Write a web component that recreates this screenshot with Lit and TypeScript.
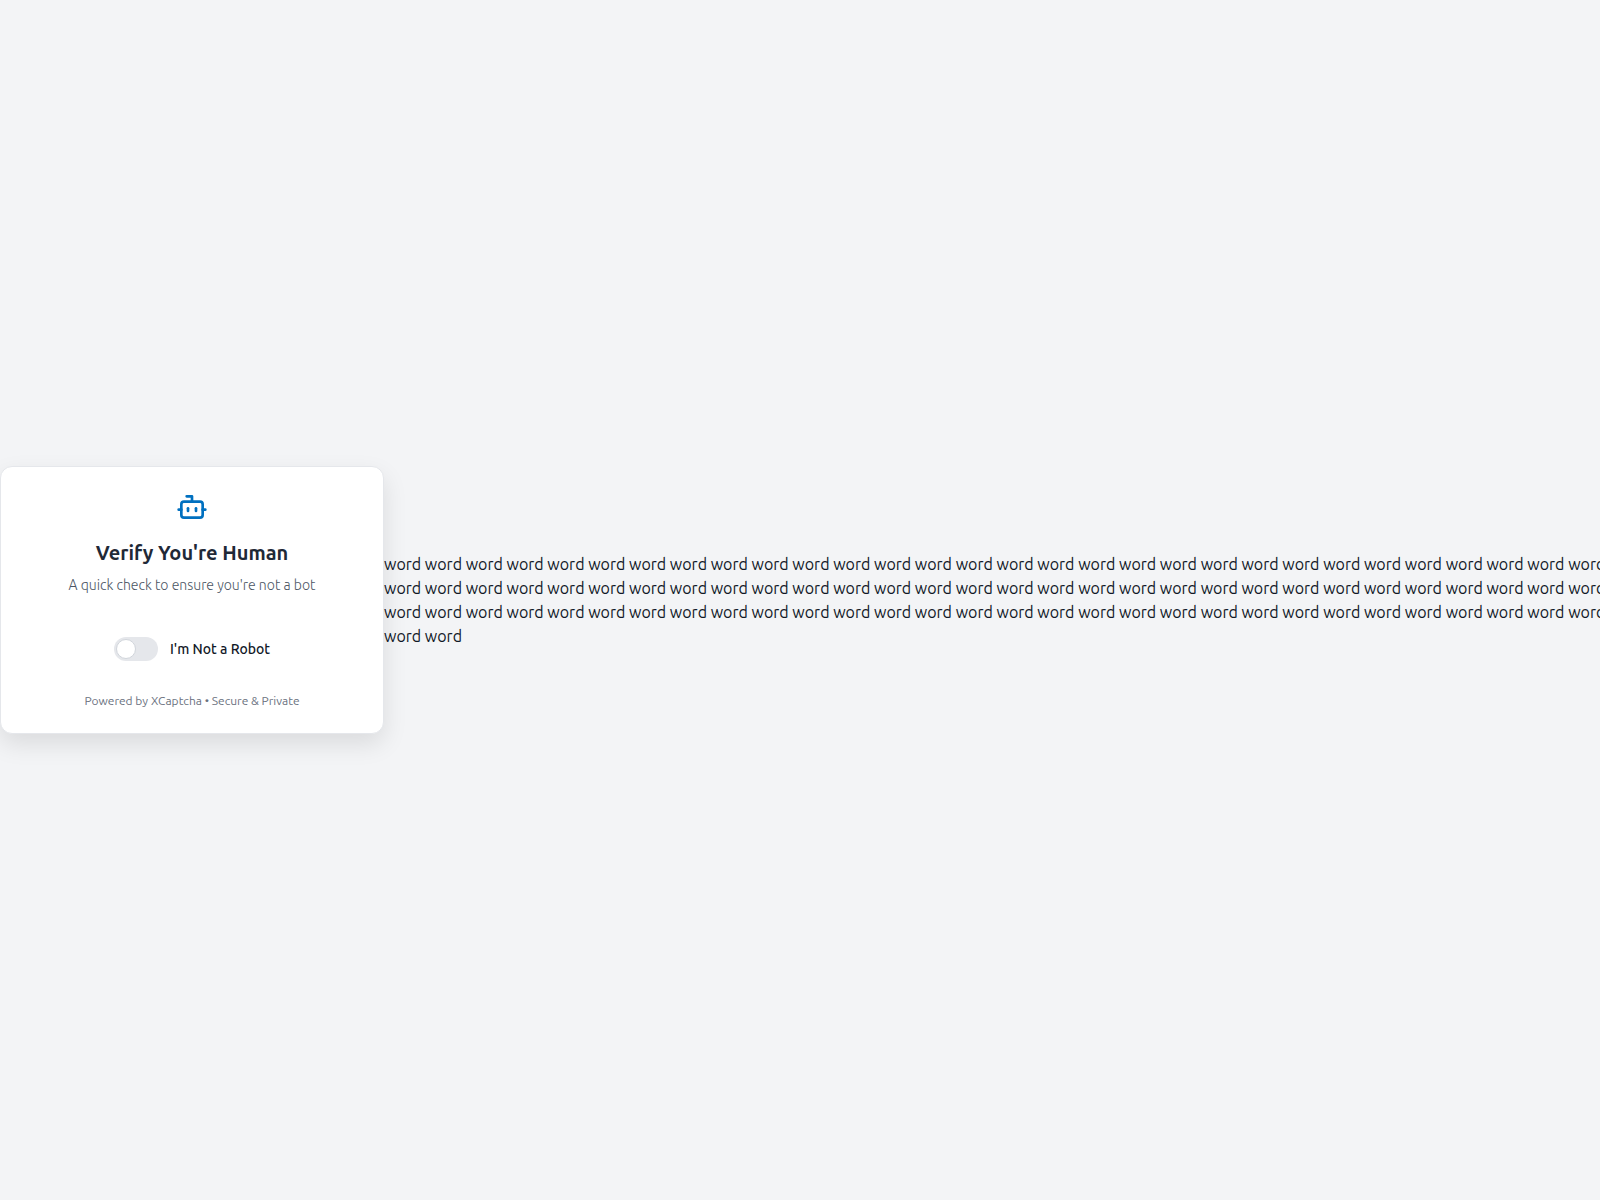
import { LitElement, html, css } from "lit";
import { customElement } from "lit/decorators.js";

const words = Array(92).fill("word").join(" ");

@customElement("app-root")
export class AppRoot extends LitElement {
  static styles = css`
    :host {
      display: flex;
      align-items: center;
      width: 1600px;
      height: 1200px;
      overflow: hidden;
      background: #f3f4f6;
      font-family: Ubuntu, "Noto Sans", sans-serif;
      font-size: 16px;
      line-height: 24px;
      color: #111827;
    }
    .card {
      flex: none;
      box-sizing: border-box;
      width: 384px;
      padding: 24px;
      background: #fff;
      border: 1px solid #e5e7eb;
      border-radius: 12px;
      box-shadow: 0 10px 25px rgba(0, 0, 0, 0.1);
      display: flex;
      flex-direction: column;
      align-items: center;
      text-align: center;
    }
    .icon { display: block; width: 32px; height: 32px; color: #0070c0; }
    h2 { margin: 16px 0 0; font-size: 20px; line-height: 28px; font-weight: 600; color: #1f2937; }
    .sub { margin: 8px 0 0; font-size: 14px; line-height: 20px; color: #4b5563; font-weight: 300; }
    .row { display: flex; align-items: center; gap: 12px; margin-top: 42px; }
    .track { position: relative; width: 44px; height: 24px; border-radius: 12px; background: #e5e7eb; }
    .knob {
      position: absolute; left: 2px; top: 2px; box-sizing: border-box;
      width: 20px; height: 20px; border-radius: 50%; background: #fff; border: 1px solid #d1d5db;
    }
    .label { font-size: 14px; line-height: 20px; font-weight: 500; color: #111827; }
    .foot { margin: 32px 0 0; font-size: 12px; line-height: 16px; color: #6b7280; }
    .text { flex: none; width: 1240px; }
  `;

  render() {
    return html`
      <div class="card">
        <svg class="icon" viewBox="0 0 24 24" fill="none" stroke="currentColor" stroke-width="2" stroke-linecap="round" stroke-linejoin="round">
          <path d="M12 8V4H8"></path>
          <rect width="16" height="12" x="4" y="8" rx="2"></rect>
          <path d="M2 14h2"></path>
          <path d="M20 14h2"></path>
          <path d="M15 13v2"></path>
          <path d="M9 13v2"></path>
        </svg>
        <h2>Verify You're Human</h2>
        <p class="sub">A quick check to ensure you're not a bot</p>
        <div class="row">
          <div class="track"><div class="knob"></div></div>
          <span class="label">I'm Not a Robot</span>
        </div>
        <p class="foot">Powered by XCaptcha • Secure &amp; Private</p>
      </div>
      <div class="text">${words}</div>
    `;
  }
}
